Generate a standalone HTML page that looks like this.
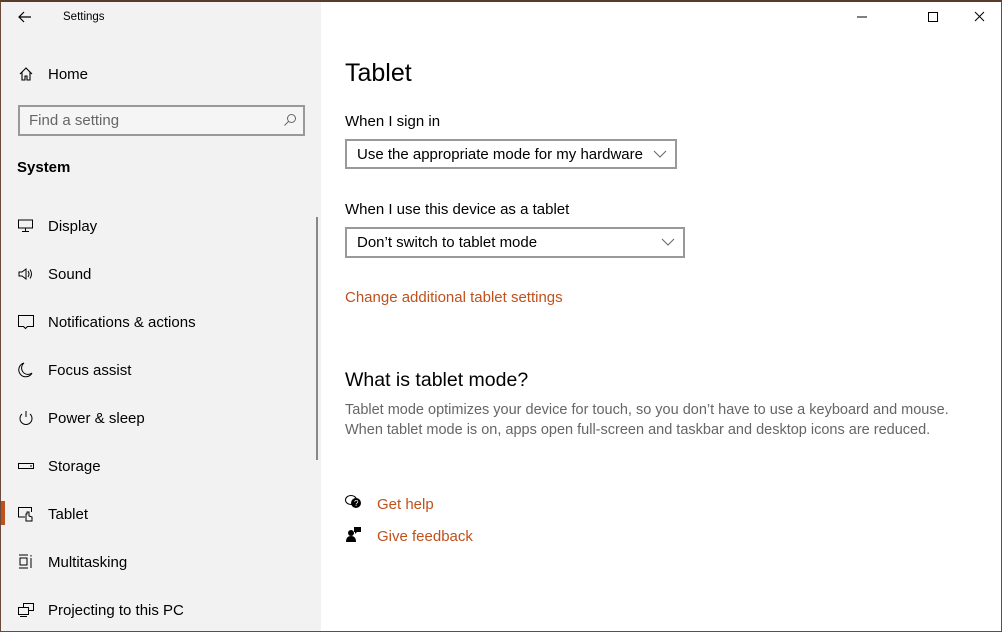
<!DOCTYPE html>
<html><head><meta charset="utf-8"><style>
*{margin:0;padding:0;box-sizing:border-box}
body{width:1002px;height:632px;overflow:hidden;font-family:"Liberation Sans",sans-serif;background:#fff;position:relative;color:#000}
.win{position:absolute;inset:0;border:1px solid #6b4a3a;border-top:2px solid #5a3a2a}
.side{position:absolute;left:1px;top:2px;width:320px;height:629px;background:#f2f2f2}
.t{position:absolute;white-space:nowrap}
.nav{position:absolute;left:48px;font-size:15px;color:#000}
.ic{position:absolute;left:17px;width:18px;height:18px}
.dd{position:absolute;border:2px solid #999;background:#fff;font-size:15px;padding-left:10px;line-height:26px}
.chev{position:absolute;right:8px;top:8px}
.lnk{color:#c0501c}
</style></head><body>
<div class="win"></div>
<div class="side"></div>
<svg class="t" style="left:17px;top:10px" width="16" height="14"><path d="M14 7H2M7 2L2 7l5 5" stroke="#000" stroke-width="1.2" fill="none"/></svg>
<div class="t" style="left:63px;top:11px;font-size:11.5px">Settings</div>
<svg class="t" style="left:18px;top:66px" width="16" height="16"><path d="M2 8L8 2l6 6M4 6v8h3v-4h2v4h3V6" stroke="#000" stroke-width="1.1" fill="none"/></svg>
<div class="t" style="left:48px;top:66px;font-size:15px">Home</div>
<div class="t" style="left:18px;top:105px;width:287px;height:31px;border:2px solid #999;background:#f5f5f5"></div>
<div class="t" style="left:29px;top:112px;font-size:15px;color:#666">Find a setting</div>
<svg class="t" style="left:283px;top:113px" width="14" height="14"><circle cx="8.5" cy="5.5" r="4" stroke="#666" fill="none"/><path d="M5.5 8.5L1.5 12.5" stroke="#666"/></svg>
<div class="t" style="left:17px;top:159px;font-size:15px;font-weight:bold">System</div>
<div style="position:absolute;left:316px;top:217px;width:2px;height:243px;background:#888"></div>
<div style="position:absolute;left:1px;top:501px;width:4px;height:24px;background:#c0501c"></div>

<svg class="ic" style="top:217px" viewBox="0 0 18 18"><rect x="1.5" y="3" width="14" height="8" stroke="#000" fill="none"/><path d="M8.5 11v3M5 14.5h7" stroke="#000"/></svg>
<div class="nav" style="top:218px">Display</div>
<svg class="ic" style="top:265px" viewBox="0 0 18 18"><path d="M2 7h3l4-3v10l-4-3H2z" stroke="#000" fill="none"/><path d="M11 6q2 3 0 6M13 4.5q3 4.5 0 9" stroke="#000" fill="none"/></svg>
<div class="nav" style="top:266px">Sound</div>
<svg class="ic" style="top:313px" viewBox="0 0 18 18"><path d="M1.5 2.5h15v11h-6l-2 2-2-2h-5z" stroke="#000" fill="none"/></svg>
<div class="nav" style="top:314px">Notifications &amp; actions</div>
<svg class="ic" style="top:361px" viewBox="0 0 18 18"><path d="M7 2a7 7 0 1 0 8 10A6 6 0 0 1 7 2z" stroke="#000" fill="none"/></svg>
<div class="nav" style="top:362px">Focus assist</div>
<svg class="ic" style="top:409px" viewBox="0 0 18 18"><path d="M5 5a6 6 0 1 0 8 0M9 2v6" stroke="#000" fill="none"/></svg>
<div class="nav" style="top:410px">Power &amp; sleep</div>
<svg class="ic" style="top:457px" viewBox="0 0 18 18"><rect x="1.5" y="6.5" width="15" height="5" stroke="#000" fill="none"/><path d="M13 9h2" stroke="#000"/></svg>
<div class="nav" style="top:458px">Storage</div>
<svg class="ic" style="top:505px" viewBox="0 0 18 18"><path d="M8 12H1.5V2.5h13V7" stroke="#000" fill="none"/><path d="M9 9v7h6v-4l-3-1V7h-2v2z" stroke="#000" fill="none"/></svg>
<div class="nav" style="top:506px">Tablet</div>
<svg class="ic" style="top:553px" viewBox="0 0 18 18"><path d="M2 2h9M2 15h9M3 5h7v7H3z" stroke="#000" fill="none"/><path d="M14 2v1.5M14 5v10" stroke="#000"/></svg>
<div class="nav" style="top:554px">Multitasking</div>
<svg class="ic" style="top:601px" viewBox="0 0 18 18"><rect x="6.5" y="2.5" width="10" height="7" stroke="#000" fill="none"/><rect x="1.5" y="6.5" width="10" height="7" stroke="#000" fill="#f2f2f2"/><path d="M3 15.5h7" stroke="#000"/></svg>
<div class="nav" style="top:602px">Projecting to this PC</div>

<svg class="t" style="left:854px;top:10px" width="140" height="14"><path d="M3 7h10" stroke="#000"/><rect x="74.5" y="2.5" width="9" height="9" stroke="#000" fill="none"/><path d="M121 2l9 9M130 2l-9 9" stroke="#000"/></svg>

<div class="t" style="left:345px;top:59px;font-size:25px">Tablet</div>
<div class="t" style="left:345px;top:113px;font-size:15px">When I sign in</div>
<div class="dd" style="left:345px;top:139px;width:332px;height:30px;line-height:27px">Use the appropriate mode for my hardware<svg class="chev" width="14" height="10"><path d="M1 2l6 6 6-6" stroke="#666" fill="none"/></svg></div>
<div class="t" style="left:345px;top:201px;font-size:15px">When I use this device as a tablet</div>
<div class="dd" style="left:345px;top:227px;width:340px;height:31px;line-height:28px">Don’t switch to tablet mode<svg class="chev" width="14" height="10"><path d="M1 2l6 6 6-6" stroke="#666" fill="none"/></svg></div>
<div class="t lnk" style="left:345px;top:289px;font-size:15px">Change additional tablet settings</div>
<div class="t" style="left:345px;top:369px;font-size:19.5px">What is tablet mode?</div>
<div class="t" style="left:345px;top:400px;font-size:14.5px;color:#666;line-height:20px">Tablet mode optimizes your device for touch, so you don’t have to use a keyboard and mouse.<br>When tablet mode is on, apps open full-screen and taskbar and desktop icons are reduced.</div>
<svg class="t" style="left:345px;top:494px" width="18" height="16"><ellipse cx="6" cy="6" rx="5.5" ry="4.5" fill="none" stroke="#000"/><circle cx="11" cy="9" r="5" fill="#000"/><text x="9" y="12" font-size="8" fill="#fff" font-family="Liberation Sans">?</text></svg>
<div class="t lnk" style="left:377px;top:496px;font-size:15px">Get help</div>
<svg class="t" style="left:346px;top:526px" width="16" height="17"><circle cx="5" cy="7" r="3" fill="#000"/><path d="M0 16q0-6 5-6t5 6z" fill="#000"/><path d="M8 1h7v5h-4l-2 2V6H8z" fill="#000"/></svg>
<div class="t lnk" style="left:377px;top:528px;font-size:15px">Give feedback</div>
</body></html>
